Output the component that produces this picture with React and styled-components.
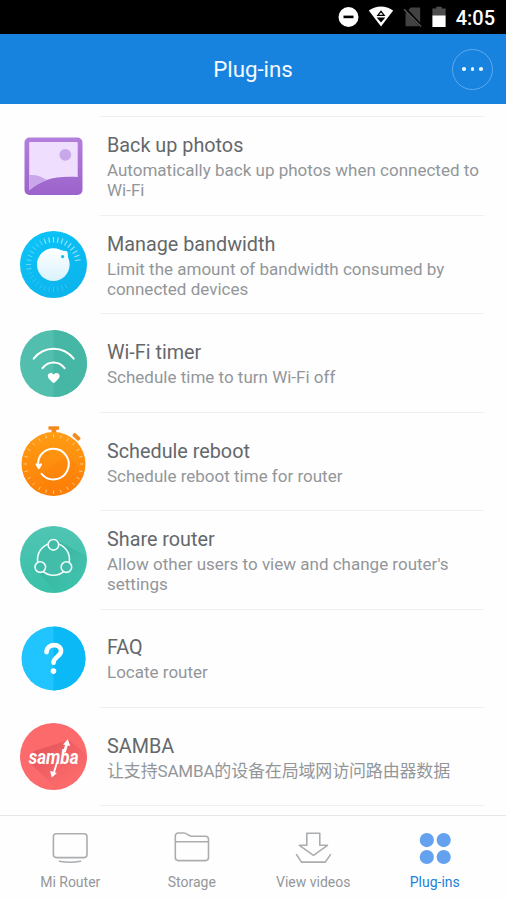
import React from 'react'
import styled, { createGlobalStyle } from 'styled-components'

const GlobalStyle = createGlobalStyle`
  *{
    box-sizing: border-box;
  }
  body{
    margin: 0;
    background: #fefefe;
    font-family: Roboto, 'Noto Sans CJK SC', sans-serif;
  }
`

const Screen = styled.div`
  display: flex;
  flex-direction: column;
  width: 506px;
  height: 900px;
  overflow: hidden;
  background: #fefefe;
`

const StatusBar = styled.div`
  display: flex;
  justify-content: flex-end;
  align-items: center;
  flex: none;
  height: 34px;
  padding-right: 11px;
  background: #000;
  svg{
    display: block;
  }
`

const StatusIcons = styled.div`
  display: flex;
  gap: 9px;
`

const Clock = styled.span`
  margin-left: 10px;
  padding-top: 2px;
  color: #fff;
  font-size: 20px;
  font-weight: 500;
  line-height: 24px;
`

const Header = styled.header`
  display: grid;
  grid-template-columns: 41px 1fr 41px;
  align-items: center;
  flex: none;
  height: 70px;
  padding: 0 13px;
  background: #1882df;
  h1{
    grid-column: 2;
    margin: 0;
    color: #f4faff;
    font-size: 22.3px;
    font-weight: 400;
    line-height: 26px;
    text-align: center;
  }
`

const MoreButton = styled.button`
  display: flex;
  justify-content: center;
  align-items: center;
  gap: 5px;
  width: 41px;
  height: 41px;
  padding: 0;
  border: 1px solid #5dabec;
  border-radius: 50%;
  background: none;
  span{
    width: 3.6px;
    height: 3.6px;
    border-radius: 50%;
    background: #e8f5ff;
  }
`

const List = styled.main`
  flex: 1;
  padding: 12.4px 22px 0 20px;
`

const Row = styled.article`
  display: flex;
  height: 98.43px;
  svg{
    display: block;
    flex: none;
    align-self: center;
    margin: 1.4px 12.5px 0 0;
    overflow: visible;
  }
`

const RowText = styled.div`
  display: flex;
  flex-direction: column;
  justify-content: center;
  flex: 1;
  padding: 2.4px 0 0 7.5px;
  border-top: 1px solid #f0f0f0;
  h2{
    margin: 0 0 1.6px;
    color: #64686b;
    font-size: 19.8px;
    font-weight: 400;
    line-height: 24.4px;
  }
  p{
    margin: 0;
    color: #939699;
    font-size: 17px;
    line-height: 20px;
    white-space: pre-line;
    &:lang(zh){
      letter-spacing: -.17px;
    }
  }
`

const ListEnd = styled.div`
  height: 1px;
  margin-left: 79.5px;
  background: #efefef;
`

const TabBar = styled.nav`
  display: grid;
  grid-template-columns: repeat(4, 1fr);
  flex: none;
  height: 85px;
  padding: 0 10.5px 0 9.5px;
  border-top: 1px solid #e6e7e8;
`

const Tab = styled.a`
  display: flex;
  flex-direction: column;
  align-items: center;
  padding-top: 13.5px;
  color: ${({ $active }) => ($active ? '#1c7fdb' : '#949799')};
  font-size: 14px;
  line-height: 18px;
  svg{
    display: block;
    margin-bottom: 7px;
  }
`

const rad = deg => (deg * Math.PI) / 180

// short radial marks around a dial
const Ticks = ({ cx, cy, from, to, angles, ...rest }) => (
  <g {...rest}>
    {angles.map(a => (
      <line
        key={a}
        x1={cx + from * Math.cos(rad(a))}
        y1={cy + from * Math.sin(rad(a))}
        x2={cx + to * Math.cos(rad(a))}
        y2={cy + to * Math.sin(rad(a))}
      />
    ))}
  </g>
)

const range = (start, end, step) => {
  const out = []
  for (let i = start; i <= end; i += step) out.push(i)
  return out
}

const PluginSvg = ({ children }) => (
  <svg width="67" height="67" viewBox="0 0 67 67" fill="none">{children}</svg>
)

const PhotosIcon = () => (
  <PluginSvg>
    <defs>
      <linearGradient id="frame" x1="0" y1="0" x2="0" y2="1">
        <stop offset="0" stopColor="#b37fdc" />
        <stop offset="1" stopColor="#9c63cb" />
      </linearGradient>
    </defs>
    <rect x="4.5" y="4.500" width="58" height="57.5" rx="5" fill="url(#frame)" />
    <path d="M10.200 9h46.500a1 1 0 0 1 1 1v34C35 42.500 21.500 46.500 9.200 57.200V10a1 1 0 0 1 1-1Z" fill="#f0defe" />
    <circle cx="45.3" cy="21.800" r="5.9" fill="#c9a8ea" />
    <path d="M9.200 42c7-.5 12 1.500 18 5-6.500 2.500-12.500 5.700-18 10.200Z" fill="#c8a6e9" />
  </PluginSvg>
)

const BandwidthIcon = () => (
  <PluginSvg>
    <defs>
      <linearGradient id="dial" x1="0" y1="0" x2=".6" y2="1">
        <stop offset="0" stopColor="#0bc5f8" />
        <stop offset="1" stopColor="#0cb4ec" />
      </linearGradient>
      <linearGradient id="knob" x1="0" y1="0" x2="0" y2="1">
        <stop offset="0" stopColor="#fff" />
        <stop offset="1" stopColor="#d9f3fd" />
      </linearGradient>
    </defs>
    <circle cx="33.5" cy="33.5" r="33.5" fill="url(#dial)" />
    <Ticks cx={33.5} cy={33.5} from={22} to={27.500} angles={range(250, 356, 10)} stroke="#92e3fb" strokeWidth="1.2" />
    <Ticks cx={33.5} cy={33.5} from={22.5} to={27.500} angles={range(170, 246, 10)} stroke="#65d5f8" strokeWidth="1" />
    <Ticks cx={33.5} cy={33.5} from={22.5} to={27.500} angles={range(60, 164, 10)} stroke="#35c4f2" strokeWidth="1" />
    <path d="M39 19.500 47 20.800 47.600 28.500Z" fill="#fff" stroke="#fff" strokeLinejoin="round" />
    <circle cx="33.300" cy="33.600" r="16.300" fill="url(#knob)" />
    <circle cx="42.600" cy="25.600" r="1.600" fill="#16b9ef" />
  </PluginSvg>
)

const WifiTimerIcon = () => (
  <PluginSvg>
    <circle cx="33.5" cy="33.5" r="33.5" fill="#52beae" />
    <path d="M33.500 0a33.500 33.500 0 0 1 0 67Z" fill="#46b6a5" />
    <g stroke="#fff" strokeWidth="2" strokeLinecap="round">
      <path d="M13.700 28.700c10.500-13.200 29.400-13.200 40 0" />
      <path d="M22.500 38.200c5.700-7.600 16.500-7.600 22.100 0" />
    </g>
    <path d="M33.700 53.200c-3.500-3-5.900-4.900-5.900-7.200 0-3.300 4.300-4.300 5.900-1.300 1.600-3 5.900-2 5.900 1.300 0 2.300-2.400 4.200-5.900 7.200Z" fill="#fff" />
  </PluginSvg>
)

const RebootIcon = () => (
  <PluginSvg>
    <defs>
      <linearGradient id="watch" x1="0" y1="0" x2="0" y2="1">
        <stop offset="0" stopColor="#ff9c14" />
        <stop offset="1" stopColor="#fd8007" />
      </linearGradient>
    </defs>
    <g transform="translate(0 .8)">
      <path d="M29.200-2.500h9.200a.8.800 0 0 1 .8.800v1.800a.8.800 0 0 1-.8.800h-2.100V5h-4.800V.9h-2.300a.8.800 0 0 1-.8-.8v-1.800a.8.800 0 0 1 .8-.8Z" fill="#f38a1d" />
      <rect x="-4.300" y="-2" width="8.600" height="4" rx="1.200" transform="translate(56.500 8) rotate(43)" fill="#f38a1d" />
      <circle cx="33.500" cy="35.200" r="32" fill="url(#watch)" />
      <path d="m47 27 17.500 17.500C60 59 45 69 29 67L20 46Z" fill="#f87508" opacity=".2" />
      <Ticks cx={33.500} cy={35.200} from={26.500} to={30} angles={range(0, 345, 15)} stroke="#ffc979" strokeWidth="1" />
      <path d="M18.200 36c-.8-9.500 6.800-16 15.100-16a15.300 15.300 0 1 1-11.700 25" stroke="#fff" strokeWidth="2" strokeLinecap="round" />
      <path d="M16.200 34.500q2.500 1.500 5.100 0 1.200.4.500 1.800l-2.200 3.600q-.8.900-1.600 0l-2.300-3.600q-.6-1.400.5-1.800Z" fill="#fff" />
    </g>
  </PluginSvg>
)

const ShareIcon = () => (
  <PluginSvg>
    <defs>
      <linearGradient id="share" x1="0" y1="0" x2="0" y2="1">
        <stop offset="0" stopColor="#50c5b3" />
        <stop offset="1" stopColor="#39c0a8" />
      </linearGradient>
      <linearGradient id="shareShade" x1=".2" y1=".2" x2=".7" y2=".8">
        <stop offset="0" stopColor="#2eac99" stopOpacity=".7" />
        <stop offset="1" stopColor="#2eac99" stopOpacity="0" />
      </linearGradient>
      <clipPath id="shareClip">
        <circle cx="33.5" cy="33.5" r="33.5" />
      </clipPath>
    </defs>
    <circle cx="33.5" cy="33.5" r="33.5" fill="url(#share)" />
    <path d="M38 15 67 30V67H37L17 45Z" fill="url(#shareShade)" clipPath="url(#shareClip)" />
    <circle cx="33.500" cy="33.300" r="16" fill="#42bdaa" stroke="#effcfa" strokeWidth="1.600" />
    <g fill="#43bba9" stroke="#effcfa" strokeWidth="1.600">
      <circle cx="33.400" cy="18.800" r="5.300" />
      <circle cx="20.300" cy="41.100" r="5.300" />
      <circle cx="46.400" cy="41.100" r="5.300" />
    </g>
  </PluginSvg>
)

const FaqIcon = () => (
  <PluginSvg>
    <circle cx="33.500" cy="33.500" r="32" fill="#20c4fe" />
    <path d="M33.500 1.500a32 32 0 0 1 0 64Z" fill="#0bb9f7" />
    <path d="M26.500 27.200c.4-9.500 15.400-9 14.500-.8-.5 5.100-7.400 5.300-7.400 11.300" stroke="#fff" strokeWidth="4.600" strokeLinecap="round" />
    <circle cx="33.500" cy="46.100" r="2.800" fill="#fff" />
  </PluginSvg>
)

const SambaIcon = () => (
  <PluginSvg>
    <defs>
      <linearGradient id="sambaShade" x1=".2" y1=".2" x2=".7" y2=".8">
        <stop offset="0" stopColor="#e2555b" stopOpacity=".8" />
        <stop offset="1" stopColor="#e2555b" stopOpacity="0" />
      </linearGradient>
      <clipPath id="sambaClip">
        <circle cx="33.5" cy="33.5" r="33.5" />
      </clipPath>
    </defs>
    <circle cx="33.500" cy="33.500" r="33.500" fill="#fc6a6b" />
    <path d="M49 17 67 32V67H38L10 40 14 28Z" fill="url(#sambaShade)" clipPath="url(#sambaClip)" />
    <text x="8.700" y="40.500" textLength="49.800" lengthAdjust="spacingAndGlyphs" fontFamily="Roboto, sans-serif" fontSize="20.5" fontWeight="700" fontStyle="italic" fill="#fff">samba</text>
    <g fill="#fff">
      <path d="m43 29.500 2-7.500-2-.4 4.800-5.400 2.500 6.800-2.500-.5-2.100 7Z" />
      <path d="m36 39.500-2.800 9.300-3.100-.8 1.700 6.500 5.100-4.500-1.900-.5 2.800-10Z" />
    </g>
  </PluginSvg>
)

const DndIcon = () => (
  <svg width="21" height="34" viewBox="0 0 21 34">
    <circle cx="10.500" cy="17" r="10" fill="#fff" />
    <rect x="5.500" y="15.600" width="10" height="2.600" fill="#000" />
  </svg>
)

const WifiIcon = () => (
  <svg width="26" height="34" viewBox="0 0 26 34">
    <path d="M.8 10.500Q13 2.300 25.200 10.500L13 26.500Z" fill="#fff" />
    <path d="m13 10.300 4.500 5.700H8.500ZM8.700 17.600h8.600L13 22.500Z" fill="#000" />
    <path d="m13 12.500 2 2.300h-4Z" fill="#fff" />
  </svg>
)

const NoSimIcon = () => (
  <svg width="20" height="34" viewBox="0 0 20 34">
    <path d="M7.500 7.500h9.700v18.700H2.500V13.500Z" fill="#424242" />
    <path d="M2 8.500 19 27" stroke="#000" strokeWidth="3" />
    <path d="M1 9.200 18 26.600" stroke="#555" strokeWidth="1.500" />
  </svg>
)

const BatteryIcon = () => (
  <svg width="14" height="34" viewBox="0 0 14 34">
    <path d="M4.300 6.800h5.400v1.700h3.900V16H.4V8.500h3.900Z" fill="#4d4d4d" />
    <path d="M.4 15.500h13.200V27H.4Z" fill="#fff" />
  </svg>
)

const TabSvg = ({ children }) => (
  <svg width="38" height="36" viewBox="0 0 38 36" fill="none" stroke="#aaadb0" strokeWidth="1.600" strokeLinecap="round" strokeLinejoin="round">
    {children}
  </svg>
)

const RouterTabIcon = () => (
  <TabSvg>
    <rect x="2.400" y="3.800" width="33.600" height="23.800" rx="3" />
    <path d="M8.500 31.200q10.500 2 21 0" />
  </TabSvg>
)

const StorageTabIcon = () => (
  <TabSvg>
    <path d="M2.300 11.800V6a3 3 0 0 1 3-3h5.500c3.600 0 4.300 3.200 7.700 3.200h14a3 3 0 0 1 3 3v18.400a3 3 0 0 1-3 3H5.300a3 3 0 0 1-3-3ZM2.300 11.800h33.200" />
  </TabSvg>
)

const VideosTabIcon = () => (
  <TabSvg>
    <path d="M12.800 3.300h13v12h7.700L19.500 25.300 5.400 15.300h7.400ZM2.500 24.600l5 7.500h23.800l5.200-7.500" />
  </TabSvg>
)

const PluginsTabIcon = () => (
  <svg width="38" height="36" viewBox="0 0 38 36" fill="#64a1ee">
    <circle cx="10.800" cy="10.100" r="7.100" />
    <circle cx="27.700" cy="10.100" r="7.100" />
    <circle cx="10.800" cy="27" r="7.100" />
    <circle cx="27.700" cy="27" r="7.100" />
  </svg>
)

const plugins = [
  { name: 'Back up photos', text: 'Automatically back up photos when connected to\nWi-Fi', Icon: PhotosIcon },
  { name: 'Manage bandwidth', text: 'Limit the amount of bandwidth consumed by\nconnected devices', Icon: BandwidthIcon },
  { name: 'Wi-Fi timer', text: 'Schedule time to turn Wi-Fi off', Icon: WifiTimerIcon },
  { name: 'Schedule reboot', text: 'Schedule reboot time for router', Icon: RebootIcon },
  { name: 'Share router', text: "Allow other users to view and change router's\nsettings", Icon: ShareIcon },
  { name: 'FAQ', text: 'Locate router', Icon: FaqIcon },
  { name: 'SAMBA', text: '让支持SAMBA的设备在局域网访问路由器数据', lang: 'zh', Icon: SambaIcon },
]

const tabs = [
  { label: 'Mi Router', Icon: RouterTabIcon },
  { label: 'Storage', Icon: StorageTabIcon },
  { label: 'View videos', Icon: VideosTabIcon },
  { label: 'Plug-ins', Icon: PluginsTabIcon, active: true },
]

const App = () => {
  return (
    <>
      <GlobalStyle />
      <Screen>
        <StatusBar>
          <StatusIcons>
            <DndIcon />
            <WifiIcon />
            <NoSimIcon />
            <BatteryIcon />
          </StatusIcons>
          <Clock>4:05</Clock>
        </StatusBar>
        <Header>
          <h1>Plug-ins</h1>
          <MoreButton aria-label="More">
            <span />
            <span />
            <span />
          </MoreButton>
        </Header>
        <List>
          {plugins.map(({ name, text, lang, Icon }) => (
            <Row key={name}>
              <Icon />
              <RowText>
                <h2>{name}</h2>
                <p lang={lang}>{text}</p>
              </RowText>
            </Row>
          ))}
          <ListEnd />
        </List>
        <TabBar>
          {tabs.map(({ label, Icon, active }) => (
            <Tab key={label} $active={active}>
              <Icon />
              {label}
            </Tab>
          ))}
        </TabBar>
      </Screen>
    </>
  )
}

export default App
